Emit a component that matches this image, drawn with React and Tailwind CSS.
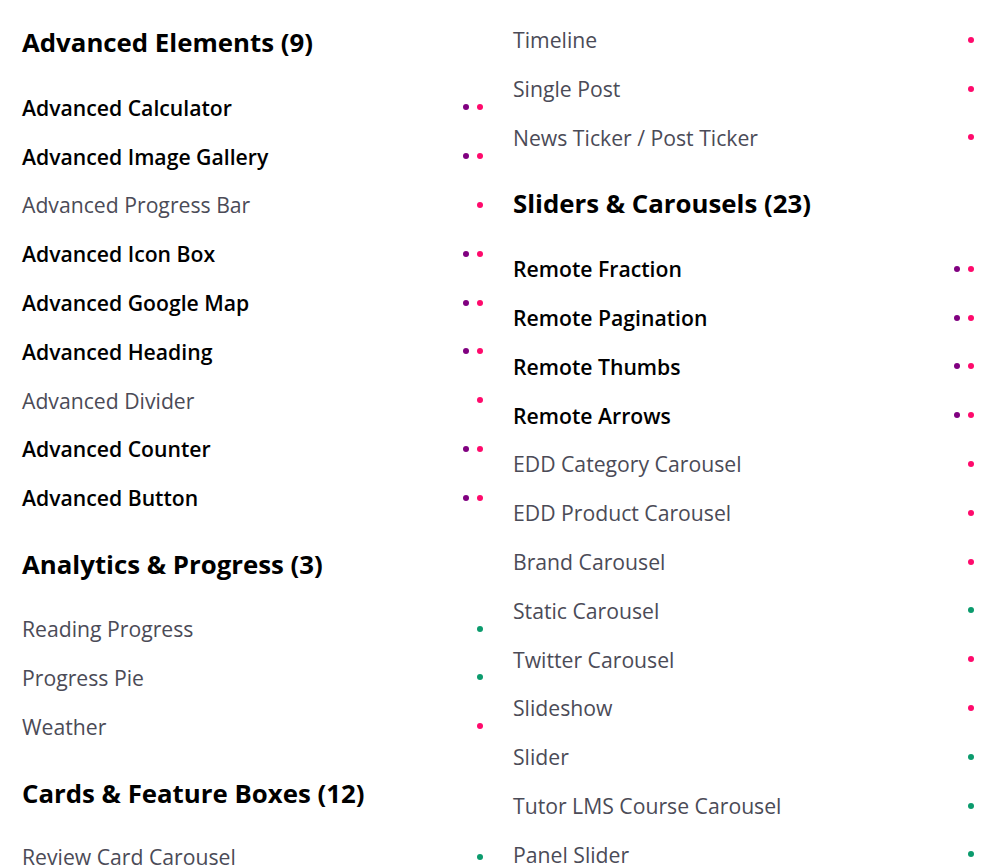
const font = "font-['Segoe_UI','Open_Sans','Noto_Sans',sans-serif]";

const leftColumn = [
  {
    title: "Advanced Elements (9)",
    items: [
      ["Advanced Calculator", "pro"],
      ["Advanced Image Gallery", "pro"],
      ["Advanced Progress Bar", "free"],
      ["Advanced Icon Box", "pro"],
      ["Advanced Google Map", "pro"],
      ["Advanced Heading", "pro"],
      ["Advanced Divider", "free"],
      ["Advanced Counter", "pro"],
      ["Advanced Button", "pro"],
    ],
  },
  {
    title: "Analytics & Progress (3)",
    items: [
      ["Reading Progress", "green"],
      ["Progress Pie", "green"],
      ["Weather", "free"],
    ],
  },
  {
    title: "Cards & Feature Boxes (12)",
    items: [["Review Card Carousel", "green"]],
  },
];

const rightTop = [
  ["Timeline", "free"],
  ["Single Post", "free"],
  ["News Ticker / Post Ticker", "free"],
];

const sliders = [
  ["Remote Fraction", "pro"],
  ["Remote Pagination", "pro"],
  ["Remote Thumbs", "pro"],
  ["Remote Arrows", "pro"],
  ["EDD Category Carousel", "free"],
  ["EDD Product Carousel", "free"],
  ["Brand Carousel", "free"],
  ["Static Carousel", "green"],
  ["Twitter Carousel", "free"],
  ["Slideshow", "free"],
  ["Slider", "green"],
  ["Tutor LMS Course Carousel", "green"],
  ["Panel Slider", "green"],
];

function Dot({ color }) {
  if (color === "purple") return <span className="w-[6px] h-[6px] rounded-full bg-[#800080]" />;
  if (color === "green") return <span className="w-[6px] h-[6px] rounded-full bg-[#0b9b6d]" />;
  return <span className="w-[6px] h-[6px] rounded-full bg-[#ff0a6c]" />;
}

function Row({ name, kind }) {
  const bold = kind === "pro";
  return (
    <li className="flex items-center justify-between h-[48.8px]">
      <span className={bold ? "text-[21.2px] font-semibold text-black" : "text-[21.2px] text-[#4b4b57]"}>{name}</span>
      <span className="flex items-center gap-2 pr-[8px]">
        {bold && <Dot color="purple" />}
        <Dot color={kind === "green" ? "green" : "pink"} />
      </span>
    </li>
  );
}

export default function App() {
  return (
    <div className={`${font} h-[868px] overflow-hidden bg-white flex gap-[22px] pl-[22px] pr-[8px] leading-none`}>
      <div className="flex-1">
        {leftColumn.map((section, i) => (
          <section key={section.title} className={i === 0 ? "pt-[30px]" : "pt-[30px]"}>
            <h2 className={i === 0 ? "text-[25.8px] font-bold text-black h-[34px] mb-[19px]" : "text-[25.8px] font-bold text-black h-[34px] mb-[18px]"}>{section.title}</h2>
            <ul>
              {section.items.map(([name, kind]) => (
                <Row key={name} name={name} kind={kind} />
              ))}
            </ul>
          </section>
        ))}
      </div>
      <div className="flex-1">
        <ul className="pt-[15.5px]">
          {rightTop.map(([name, kind]) => (
            <Row key={name} name={name} kind={kind} />
          ))}
        </ul>
        <section className="pt-[29.5px]">
          <h2 className="text-[25.8px] font-bold text-black h-[34px] mb-[19px]">Sliders & Carousels (23)</h2>
          <ul>
            {sliders.map(([name, kind]) => (
              <Row key={name} name={name} kind={kind} />
            ))}
          </ul>
        </section>
      </div>
    </div>
  );
}
